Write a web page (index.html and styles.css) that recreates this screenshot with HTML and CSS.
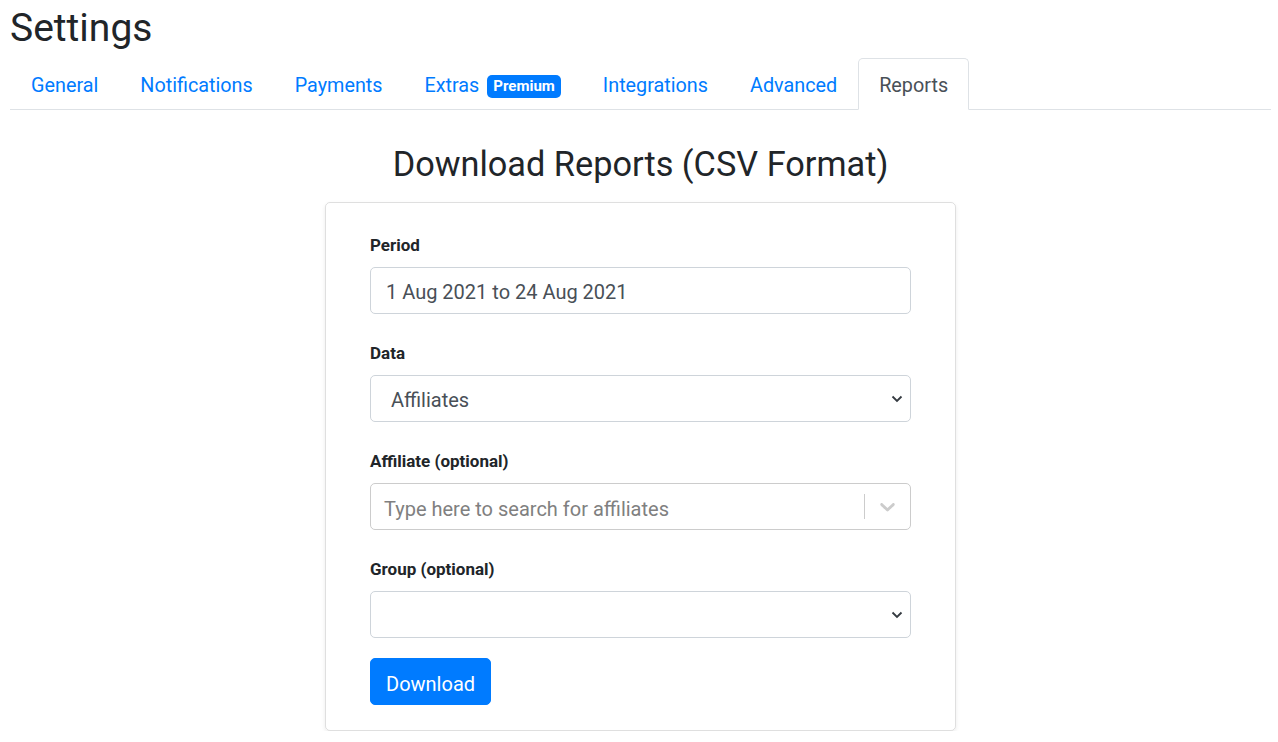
FILE: index.html
```html
<!DOCTYPE html>
<html lang="en">
<head>
<meta charset="utf-8">
<title>Settings</title>
<link rel="stylesheet" href="styles.css">
</head>
<body>
<div class="page">
  <h2 class="title">Settings</h2>
  <ul class="tabs">
    <li><a class="tab">General</a></li>
    <li><a class="tab">Notifications</a></li>
    <li><a class="tab">Payments</a></li>
    <li><a class="tab">Extras<span class="badge">Premium</span></a></li>
    <li><a class="tab">Integrations</a></li>
    <li><a class="tab">Advanced</a></li>
    <li><a class="tab active">Reports</a></li>
  </ul>
  <h3 class="heading">Download Reports (CSV Format)</h3>
  <div class="card">
    <div class="group">
      <label class="label">Period</label>
      <div class="control">1 Aug 2021 to 24 Aug 2021</div>
    </div>
    <div class="group">
      <label class="label">Data</label>
      <div class="control select">
        <span class="select-value">Affiliates</span>
        <svg class="caret" width="12" height="8" viewBox="0 0 12 8"><path d="M1.5 1.5 L6 6 L10.5 1.5" fill="none" stroke="#343a40" stroke-width="1.8"/></svg>
      </div>
    </div>
    <div class="group">
      <label class="label">Affiliate (optional)</label>
      <div class="rs-control">
        <span class="rs-placeholder">Type here to search for affiliates</span>
        <span class="rs-sep"></span>
        <span class="rs-indicator">
          <svg width="25" height="25" viewBox="0 0 20 20"><path fill="#cccccc" d="M4.516 7.548c0.436-0.446 1.043-0.481 1.576 0l3.908 3.747 3.908-3.747c0.533-0.481 1.141-0.446 1.574 0 0.436 0.445 0.408 1.197 0 1.615-0.406 0.418-4.695 4.502-4.695 4.502-0.217 0.223-0.502 0.335-0.787 0.335s-0.57-0.112-0.789-0.335c0 0-4.287-4.084-4.695-4.502s-0.436-1.17 0-1.615z"/></svg>
        </span>
      </div>
    </div>
    <div class="group">
      <label class="label">Group (optional)</label>
      <div class="control select">
        <span class="select-value"></span>
        <svg class="caret" width="12" height="8" viewBox="0 0 12 8"><path d="M1.5 1.5 L6 6 L10.5 1.5" fill="none" stroke="#343a40" stroke-width="1.8"/></svg>
      </div>
    </div>
    <button class="btn">Download</button>
  </div>
</div>
</body>
</html>
```
FILE: styles.css
```css
* { box-sizing: border-box; }
html, body { margin: 0; padding: 0; background: #fff; }
body {
  font-family: Roboto, "Liberation Sans", Arial, sans-serif;
  font-size: 20px;
  line-height: 1.5;
  color: #212529;
}
.page { padding: 2px 7px 0 10px; }
.title {
  margin: 0 0 8px 0;
  padding-top: 2px;
  height: 48px;
  font-size: 39px;
  font-weight: 400;
  line-height: 48px;
}
.tabs {
  list-style: none;
  margin: 0;
  padding: 0;
  display: flex;
  border-bottom: 1px solid #dee2e6;
}
.tabs li { margin-bottom: -1px; }
.tab {
  display: flex;
  align-items: center;
  padding: 12px 20px 8px 20px;
  font-size: 19.8px;
  line-height: 30px;
  border: 1px solid transparent;
  border-top-left-radius: 5px;
  border-top-right-radius: 5px;
  color: #007bff;
  cursor: pointer;
}
.tab.active {
  color: #495057;
  background: #fff;
  border-color: #dee2e6 #dee2e6 #fff;
}
.badge {
  margin-left: 8px;
  background: #007bff;
  color: #fff;
  font-size: 15px;
  font-weight: 700;
  line-height: 15px;
  padding: 4px 6px;
  border-radius: 5px;
}
.heading {
  margin: 0;
  padding: 33px 0 17px 0;
  height: 92px;
  text-align: center;
  font-size: 34.3px;
  font-weight: 400;
  line-height: 42px;
}
.card {
  width: 631px;
  margin: 0 auto;
  border: 1px solid rgba(0,0,0,.125);
  border-radius: 5px;
  box-shadow: 0 2px 4px rgba(0,0,0,.08);
  padding: 30px 44px 25px 44px;
}
.group { margin-bottom: 27px; }
.group:nth-of-type(4) { margin-bottom: 20px; }
.label {
  display: block;
  font-size: 17px;
  font-weight: 700;
  line-height: 24px;
  height: 24px;
  margin-bottom: 10px;
}
.control {
  height: 47px;
  border: 1px solid #ced4da;
  border-radius: 5px;
  padding: 9px 15px 5px 15px;
  color: #495057;
  line-height: 31px;
}
.select {
  display: flex;
  align-items: center;
  justify-content: space-between;
  padding-left: 20px;
  padding-right: 7px;
}
.caret { display: block; margin-top: -4px; }
.rs-control {
  height: 47px;
  border: 1px solid #cccccc;
  border-radius: 5px;
  display: flex;
  align-items: center;
}
.rs-placeholder {
  flex: 1;
  padding-left: 13px;
  padding-top: 4px;
  color: #808080;
}
.rs-sep {
  width: 1px;
  align-self: stretch;
  margin: 10px 0;
  background: #cccccc;
}
.rs-indicator {
  padding: 0 10px;
  display: flex;
  align-items: center;
}
.rs-indicator svg { display: block; }
.btn {
  display: block;
  height: 47px;
  padding: 9px 15px 5px 15px;
  font-family: inherit;
  font-size: 20px;
  line-height: 30px;
  color: #fff;
  background: #007bff;
  border: 1px solid #007bff;
  border-radius: 5px;
}
```
